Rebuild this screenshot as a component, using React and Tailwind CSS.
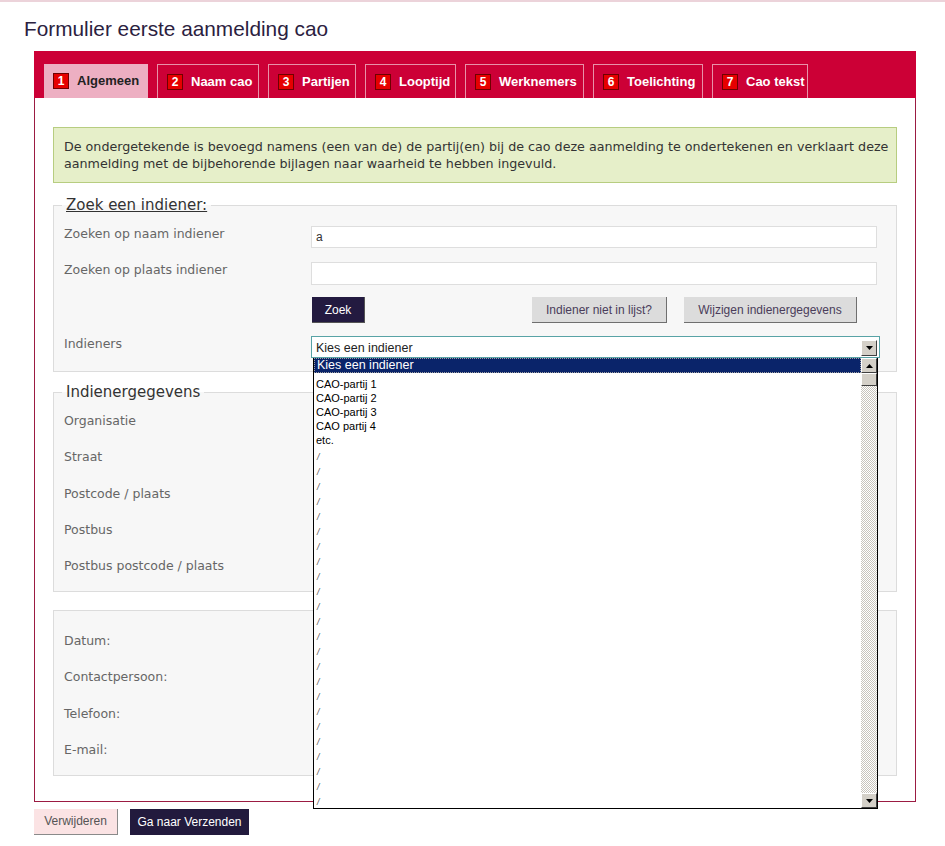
import React from "react";

const tabs = [
  { label: "Algemeen", w: "w-[104px]" },
  { label: "Naam cao", w: "w-[102px]" },
  { label: "Partijen", w: "w-[88px]" },
  { label: "Looptijd", w: "w-[91px]" },
  { label: "Werknemers", w: "w-[119px]" },
  { label: "Toelichting", w: "w-[110px]" },
  { label: "Cao tekst", w: "w-[96px]" },
];

const Triangle = ({ up }) => (
  <svg width="7" height="4" viewBox="0 0 7 4">
    {up ? <path d="M3.5 0 L7 4 L0 4 Z" fill="#000" /> : <path d="M0 0 L7 0 L3.5 4 Z" fill="#000" />}
  </svg>
);

const WinButton = ({ up, className = "" }) => (
  <div
    className={`flex items-center justify-center bg-[#d4d0c8] border border-t-white border-l-white border-r-[#404040] border-b-[#404040] ${className}`}
  >
    <Triangle up={up} />
  </div>
);

const Row = ({ label, children }) => (
  <div className="flex h-[22px]">
    <div className="w-[247px] shrink-0 text-[12.5px] leading-[16px] text-[#666]">{label}</div>
    <div className="flex-1">{children}</div>
  </div>
);

const Dropdown = () => {
  const options = ["CAO-partij 1", "CAO-partij 2", "CAO-partij 3", "CAO partij 4", "etc."];
  const slashes = Array.from({ length: 24 });
  return (
    <div className="absolute left-[2px] top-[22px] z-10 w-[565px] h-[451px] bg-white border border-t-0 border-black flex">
      <div className="flex-1 flex flex-col font-['Liberation_Sans'] text-black overflow-hidden">
        <div className="h-[15px] bg-[#0a246a] border border-dotted border-[#a0a0a0] text-white text-[12.5px] leading-[13px] pl-[2px]">
          Kies een indiener
        </div>
        <div className="pt-[4px]">
          {options.map((o) => (
            <div key={o} className="h-[14px] text-[11px] leading-[14px] pl-[2px]">
              {o}
            </div>
          ))}
        </div>
        <div className="pt-[3px]">
          {slashes.map((_, i) => (
            <div key={i} className="h-[15px] text-[9px] leading-[15px] pl-[3px] text-[#555] italic">
              /
            </div>
          ))}
        </div>
      </div>
      <div className="w-[16px] flex flex-col">
        <WinButton up className="h-[15px]" />
        <div className="h-[13px] bg-[#d4d0c8] border border-t-white border-l-white border-r-[#404040] border-b-[#404040]" />
        <div className="flex-1 bg-[image:repeating-conic-gradient(#c8c4bc_0%_25%,#ffffff_0%_50%)] bg-[length:2px_2px]" />
        <WinButton className="h-[15px]" />
      </div>
    </div>
  );
};

export default function App() {
  return (
    <div className="min-h-[846px] bg-white border-t-2 border-[#ecd3da] font-['DejaVu_Sans',sans-serif]">
      <h1 className="pl-6 pt-[15px] text-[20.8px] leading-[24px] text-[#2b2140] font-['Liberation_Sans',sans-serif]">
        Formulier eerste aanmelding cao
      </h1>

      <div className="ml-[34px] mt-[10px] w-[882px]">
        {/* tabs band */}
        <div className="h-[47px] bg-[#cc0036] pt-[13px] pl-[10px] flex gap-[9px] items-end">
          {tabs.map((t, i) => (
            <div
              key={t.label}
              className={`${t.w} h-[34px] flex items-center pl-[9px] font-['Liberation_Sans',sans-serif] font-bold text-[13px] whitespace-nowrap ${
                i === 0 ? "bg-[#edafc2] text-[#222]" : "border border-b-0 border-[#e891a8] text-white"
              }`}
            >
              <span className="w-[16px] h-[16px] shrink-0 flex items-center justify-center bg-[#e60000] border border-[#700000] text-white text-[12px] leading-none mr-[8px]">
                {i + 1}
              </span>
              {t.label}
            </div>
          ))}
        </div>

        {/* body */}
        <div className="border border-t-0 border-[#9b1b42] px-[18px] pt-[29px] pb-[25px]">
          <div className="bg-[#e6efc9] border border-[#b7cd80] px-[10px] py-[10px] text-[12.7px] leading-[17px] text-[#333] whitespace-nowrap">
            De ondergetekende is bevoegd namens (een van de) de partij(en) bij de cao deze aanmelding te ondertekenen en verklaart deze
            <br />
            aanmelding met de bijbehorende bijlagen naar waarheid te hebben ingevuld.
          </div>

          <fieldset className="mt-[13px] bg-[#f7f7f7] border border-[#dcdcdc] pl-[10px] pr-[19px] pt-[12px] pb-[13px]">
            <legend className="ml-[-2px] px-[4px] text-[15px] leading-[18px] text-[#333] underline">Zoek een indiener:</legend>
            <div className="flex flex-col">
              <Row label="Zoeken op naam indiener">
                <div className="h-[22px] bg-white border border-[#dedede] pl-[4px] text-[12px] leading-[20px] text-[#333] font-['Liberation_Sans',sans-serif]">
                  a
                </div>
              </Row>
              <div className="mt-[14px]">
                <Row label="Zoeken op plaats indiener">
                  <div className="h-[23px] bg-white border border-[#dedede]" />
                </Row>
              </div>
              <div className="mt-[13px] flex h-[26px] pl-[248px] pr-[20px] font-['Liberation_Sans',sans-serif] text-[12px]">
                <button className="w-[53px] bg-[#231a40] text-white border-r border-b border-[#555]">Zoek</button>
                <div className="flex-1" />
                <button className="w-[135px] bg-[#dcdcdc] text-[#4a3c5a] border-r border-b border-[#6f6f6f]">
                  Indiener niet in lijst?
                </button>
                <button className="ml-[17px] w-[173px] bg-[#dcdcdc] text-[#4a3c5a] border-r border-b border-[#6f6f6f]">
                  Wijzigen indienergegevens
                </button>
              </div>
              <div className="mt-[13px] flex h-[22px]">
                <div className="w-[247px] shrink-0 text-[12.5px] leading-[16px] text-[#666]">Indieners</div>
                <div className="relative w-[569px] -mr-[3px]">
                  <div className="h-[22px] bg-white border border-[#58a3a6] flex items-center pl-[4px] pt-[3px] text-[12.5px] text-[#222] font-['Liberation_Sans',sans-serif]">
                    <span className="flex-1">Kies een indiener</span>
                    <WinButton className="w-[16px] h-[16px] mr-[2px] mb-[2px]" />
                  </div>
                  <Dropdown />
                </div>
              </div>
            </div>
          </fieldset>

          <fieldset className="mt-[11px] bg-[#f7f7f7] border border-[#dcdcdc] pl-[10px] pr-[19px] pt-[12px] pb-[11px]">
            <legend className="ml-[-2px] px-[4px] text-[15px] leading-[18px] text-[#333]">Indienergegevens</legend>
            <div className="flex flex-col gap-[14.25px]">
              {["Organisatie", "Straat", "Postcode / plaats", "Postbus", "Postbus postcode / plaats"].map((l) => (
                <Row key={l} label={l} />
              ))}
            </div>
          </fieldset>

          <div className="mt-[18px] bg-[#f7f7f7] border border-[#dcdcdc] pl-[10px] pr-[19px] pt-[22px] pb-[11px]">
            <div className="flex flex-col gap-[14.3px]">
              {["Datum:", "Contactpersoon:", "Telefoon:", "E-mail:"].map((l) => (
                <Row key={l} label={l} />
              ))}
            </div>
          </div>
        </div>

        <div className="mt-[7px] flex gap-[12px] font-['Liberation_Sans',sans-serif] text-[12px]">
          <button className="w-[84px] h-[26px] bg-[#fbe3e4] text-[#555] border-r border-b border-[#8a8a8a]">Verwijderen</button>
          <button className="w-[119px] h-[26px] bg-[#221a3d] text-white">Ga naar Verzenden</button>
        </div>
      </div>
    </div>
  );
}
